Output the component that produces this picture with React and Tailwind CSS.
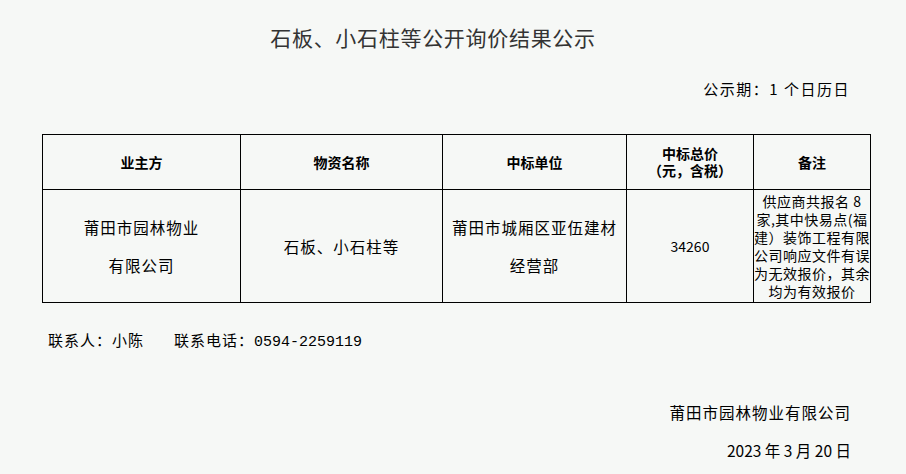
import React from "react";

const cjk = { fontFamily: '"Noto Sans CJK SC", "Liberation Sans", sans-serif' };

const remarks = [
  "供应商共报名 8",
  "家,其中快易点(福",
  "建）装饰工程有限",
  "公司响应文件有误",
  "为无效报价，其余",
  "均为有效报价",
];

export default function App() {
  return (
    <div className="w-[906px] h-[474px] bg-[#f6f8f6] text-black overflow-hidden" style={cjk}>
      <div className="px-[42px] pt-[21px]">
        <h1 className="pr-[40px] text-center text-[21px] leading-[32px] tracking-[0.7px] text-[#333]">
          石板、小石柱等公开询价结果公示
        </h1>

        <div className="mt-[26px] pr-[14px] text-right text-[15px] leading-[20px] tracking-[1.5px]">
          公示期：1 个日历日
        </div>

        <table className="mt-[35px] w-[829px] border-collapse border border-black">
          <thead>
            <tr className="h-[55px] text-[14px] leading-[17px] font-bold">
              <th className="w-[198px] border border-black">业主方</th>
              <th className="w-[202px] border border-black">物资名称</th>
              <th className="w-[184px] border border-black">中标单位</th>
              <th className="w-[127px] border border-black">
                <div>中标总价</div>
                <div>（元，含税）</div>
              </th>
              <th className="border border-black">备注</th>
            </tr>
          </thead>
          <tbody>
            <tr className="h-[113px] text-[15.5px] leading-[38px] tracking-[1px] text-center">
              <td className="border border-black">
                <div>莆田市园林物业</div>
                <div>有限公司</div>
              </td>
              <td className="border border-black">石板、小石柱等</td>
              <td className="border border-black">
                <div>莆田市城厢区亚伍建材</div>
                <div>经营部</div>
              </td>
              <td className="border border-black text-[14px] tracking-normal">34260</td>
              <td className="border border-black text-[14px] leading-[18px] tracking-[0.5px] whitespace-nowrap">
                {remarks.map((line) => (
                  <div key={line}>{line}</div>
                ))}
              </td>
            </tr>
          </tbody>
        </table>

        <div className="mt-[27px] pl-[6px] text-[15px] leading-[20px] tracking-[1px] flex gap-[30px]">
          <span>联系人：小陈</span>
          <span>
            联系电话：<span className="tracking-normal" style={{ fontFamily: '"Liberation Mono", monospace' }}>0594-2259119</span>
          </span>
        </div>

        <div className="mt-[49px] pr-[13px] flex flex-col items-end text-[15.5px] leading-[20px]">
          <div className="tracking-[1px]">莆田市园林物业有限公司</div>
          <div className="mt-[18px] tracking-normal">2023 年 3 月 20 日</div>
        </div>
      </div>
    </div>
  );
}
